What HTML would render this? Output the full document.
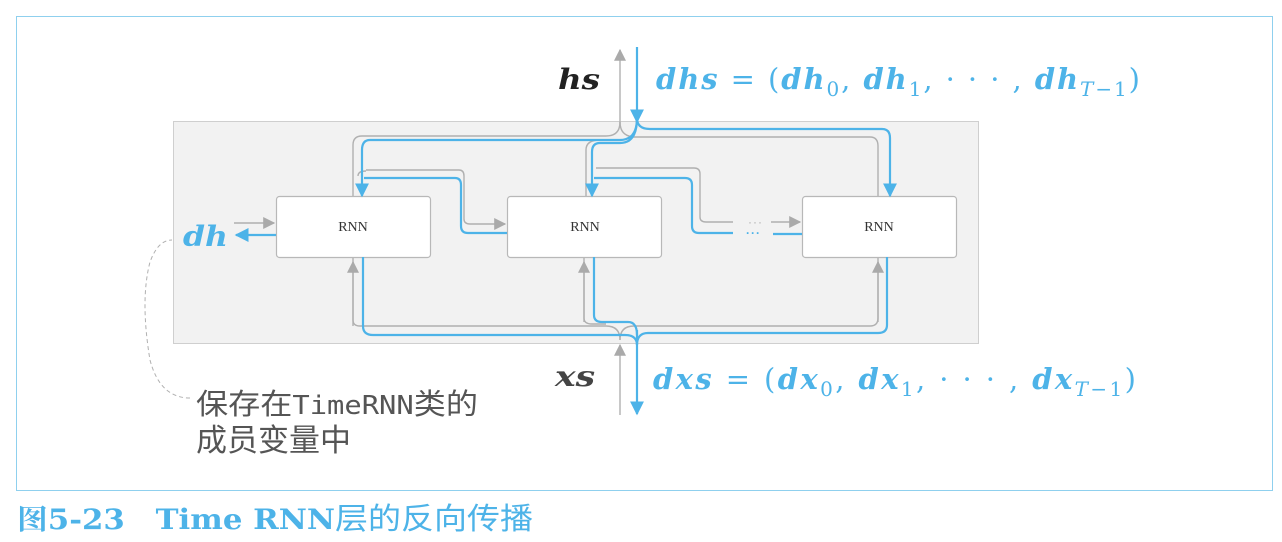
<!DOCTYPE html>
<html><head><meta charset="utf-8"><style>
html,body{margin:0;padding:0;background:#fff;width:1282px;height:542px;overflow:hidden}
svg{display:block}
.m{font-family:"DejaVu Serif","Liberation Serif",serif;font-style:italic;font-weight:bold}
</style></head><body>
<svg width="1282" height="542" viewBox="0 0 1282 542" xmlns="http://www.w3.org/2000/svg">
<defs>
<marker id="bB" viewBox="0 0 10 10" refX="9" refY="5" markerWidth="14" markerHeight="14" markerUnits="userSpaceOnUse" orient="auto"><path d="M0,0L10,5L0,10z" fill="#4db3e8"/></marker>
<marker id="gA" viewBox="0 0 10 10" refX="9" refY="5" markerWidth="12" markerHeight="12" markerUnits="userSpaceOnUse" orient="auto"><path d="M0,0L10,5L0,10z" fill="#aaa"/></marker>
</defs>
<rect x="16.5" y="16.5" width="1256" height="474" fill="none" stroke="#8fd0ee" stroke-width="1"/>
<rect x="173.5" y="121.5" width="805" height="222" fill="#f2f2f2" stroke="#cfcfcf"/>

<g fill="none" stroke="#b0b0b0" stroke-width="1.4">
<path d="M620,125 V50" marker-end="url(#gA)"/>
<path d="M620,122 Q620,136 606,136 H362 Q353,136 353,145 V196"/>
<path d="M620,122 Q620,136 634,137 H870 Q878,137 878,146 V196"/>
<path d="M586,196 V150 Q586,140 600,140"/>
<path d="M366,171 Q358,171 358,176"/>
<path d="M366,170 H459 Q464,170 464,176 V219 Q464,224 470,224 H505" marker-end="url(#gA)"/>
<path d="M596,168 H694 Q700,168 700,174 V217 Q700,222 706,222 H733"/>
<path d="M771,222 H800" marker-end="url(#gA)"/>
<path d="M234,223 H274" marker-end="url(#gA)"/>
<path d="M353,258 V320 Q353,326 360,326 H606 Q620,326 620,340"/>
<path d="M584,258 V318 Q584,324 592,324 H606"/>
<path d="M878,258 V318 Q878,326 870,326 H634 Q620,326 620,340"/>
<path d="M353,326 V262" marker-end="url(#gA)"/>
<path d="M584,322 V262" marker-end="url(#gA)"/>
<path d="M878,322 V262" marker-end="url(#gA)"/>
<path d="M620,415 V345" marker-end="url(#gA)"/>
<path d="M190,398 Q160,398 150,360 Q140,300 150,262 Q158,240 172,240" stroke-dasharray="4,3" stroke-width="1"/>
</g>
<text x="748" y="226" fill="#b0b0b0" font-family="Liberation Sans,sans-serif" font-size="12" letter-spacing="1">···</text>

<g fill="#fff" stroke="#b8b8b8" stroke-width="1.2">
<rect x="276.5" y="196.5" width="154" height="61" rx="3"/>
<rect x="507.5" y="196.5" width="154" height="61" rx="3"/>
<rect x="802.5" y="196.5" width="154" height="61" rx="3"/>
</g>
<g font-family="Liberation Serif,serif" font-size="14" fill="#333" text-anchor="middle">
<text x="353" y="231">RNN</text><text x="585" y="231">RNN</text><text x="879" y="231">RNN</text>
</g>

<g fill="none" stroke="#4db3e8" stroke-width="2.2">
<path d="M637,47 V122" marker-end="url(#bB)"/>
<path d="M637,118 Q637,129 650,129 H882 Q890,129 890,138 V196" marker-end="url(#bB)"/>
<path d="M637,118 Q637,140 620,140 H370 Q362,140 362,150 V196" marker-end="url(#bB)"/>
<path d="M637,118 Q637,143 620,143 H600 Q592,143 592,152 V196" marker-end="url(#bB)"/>
<path d="M364,178 Q364,178 372,178 H455 Q461,178 461,185 V226 Q461,233 468,233 H507"/>
<path d="M594,178 H685 Q692,178 692,185 V226 Q692,233 699,233 H733"/>
<path d="M773,234 H802"/>
<path d="M276,235 H236" marker-end="url(#bB)"/>
<path d="M363,257 V326 Q363,335 373,335 H625 Q637,335 637,345"/>
<path d="M594,257 V315 Q594,322 602,322 H628 Q637,322 637,335"/>
<path d="M887,257 V325 Q887,333 878,333 H648 Q637,333 637,345"/>
<path d="M637,330 V414" marker-end="url(#bB)"/>
</g>
<text x="746" y="237" fill="#4db3e8" font-family="Liberation Sans,sans-serif" font-size="12" font-weight="bold" letter-spacing="1">···</text>

<text class="m" x="558" y="89" font-size="28" fill="#222" textLength="42" lengthAdjust="spacingAndGlyphs">hs</text>
<text class="m" x="555" y="386" font-size="28" fill="#444" textLength="40" lengthAdjust="spacingAndGlyphs">xs</text>
<text class="m" x="183" y="246" font-size="28" fill="#4db3e8" textLength="45" lengthAdjust="spacingAndGlyphs">dh</text>
<g fill="#4db3e8" font-family="DejaVu Serif,Liberation Serif,serif" font-size="29">
<text x="656" y="89" textLength="484" lengthAdjust="spacing"><tspan class="m">dhs</tspan> = (<tspan class="m">dh</tspan><tspan font-size="20" dy="7">0</tspan><tspan dy="-7">, </tspan><tspan class="m">dh</tspan><tspan font-size="20" dy="7">1</tspan><tspan dy="-7">, · · · , </tspan><tspan class="m">dh</tspan><tspan font-size="20" dy="7" font-style="italic">T</tspan><tspan font-size="20">−1</tspan><tspan dy="-7">)</tspan></text>
<text x="653" y="389" textLength="483" lengthAdjust="spacing"><tspan class="m">dxs</tspan> = (<tspan class="m">dx</tspan><tspan font-size="20" dy="7">0</tspan><tspan dy="-7">, </tspan><tspan class="m">dx</tspan><tspan font-size="20" dy="7">1</tspan><tspan dy="-7">, · · · , </tspan><tspan class="m">dx</tspan><tspan font-size="20" dy="7" font-style="italic">T</tspan><tspan font-size="20">−1</tspan><tspan dy="-7">)</tspan></text>
</g>

<g fill="#555" font-family="Liberation Sans,'Noto Sans CJK SC',sans-serif">
<text x="196" y="414" font-size="29" textLength="282" lengthAdjust="spacingAndGlyphs">保存在<tspan font-family="DejaVu Sans Mono,Liberation Mono,monospace" font-size="26">TimeRNN</tspan>类的</text>
<text x="196" y="451" font-size="31">成员变量中</text>
</g>
<text x="17" y="529" fill="#4db3e8" font-size="28" font-weight="bold" font-family="DejaVu Serif,'Noto Serif CJK SC',serif" textLength="516" lengthAdjust="spacingAndGlyphs">图5-23　Time RNN<tspan font-family="'Noto Sans CJK SC',sans-serif" font-weight="normal" font-size="30">层的反向传播</tspan></text>
</svg>
</body></html>
